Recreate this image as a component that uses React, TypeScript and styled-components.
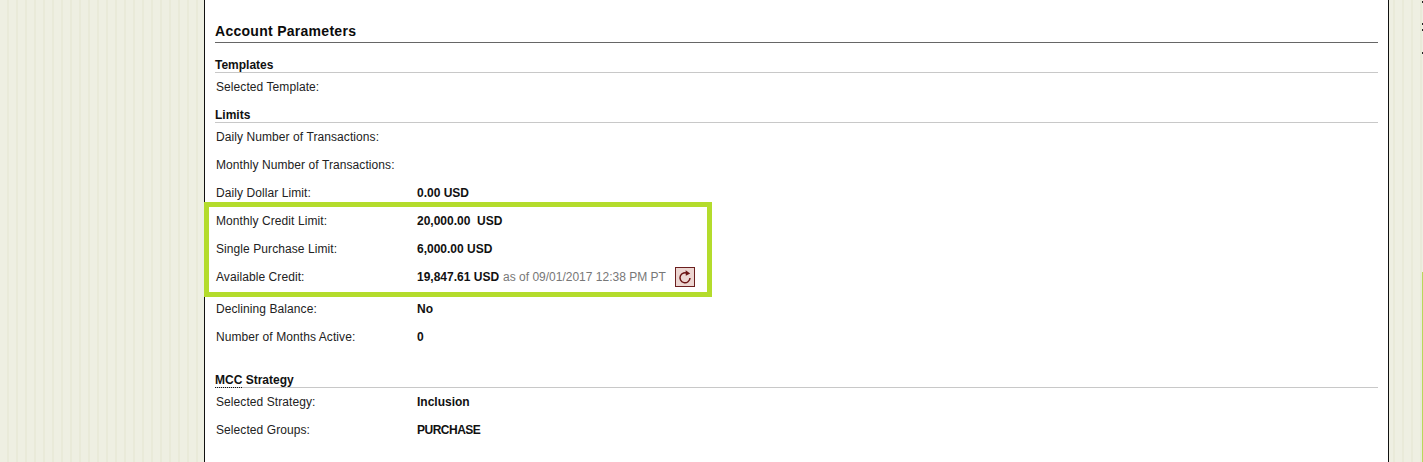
import React from "react";
import styled, { createGlobalStyle } from "styled-components";

const Global = createGlobalStyle`
  html, body { margin: 0; padding: 0; height: 462px; overflow: hidden; }
  body {
    font-family: "Liberation Sans", Arial, sans-serif;
    font-size: 12px;
    color: #111;
    background-color: #edeee0;
    background-image: repeating-linear-gradient(90deg, #eeefe2 0 7px, #e9ead9 7px 9px);
  }
`;

const Page = styled.div`
  position: relative;
  width: 1423px;
  height: 462px;
  overflow: hidden;
  display: flex;
  padding-left: 204px;
  box-sizing: border-box;
`;

const Panel = styled.main`
  position: relative;
  width: 1185px;
  height: 462px;
  box-sizing: border-box;
  background: #fff;
  border-left: 1px solid #111;
  border-right: 1px solid #111;
  padding: 22px 10px 0 10px;
`;

const Title = styled.h1`
  margin: 0;
  height: 20px;
  line-height: 18px;
  font-size: 14px;
  font-weight: bold;
  letter-spacing: 0.28px;
  color: #0b0b0b;
  border-bottom: 1px solid #666;
`;

const SectionTitle = styled.h2<{ $top: number }>`
  margin: ${(p) => p.$top}px 0 0;
  height: 15px;
  line-height: 17px;
  font-size: 12px;
  font-weight: bold;
  color: #111;
  border-bottom: 1px solid #c8c8c8;
`;

const Row = styled.div<{ $top?: number }>`
  display: flex;
  align-items: center;
  height: 28px;
  margin-top: ${(p) => p.$top ?? 0}px;
  padding-left: 1px;
`;

const Label = styled.span`
  width: 201px;
  flex: none;
  color: #222;
  letter-spacing: 0.08px;
`;

const Value = styled.span<{ $squeeze?: number }>`
  font-weight: bold;
  color: #111;
  letter-spacing: ${(p) => p.$squeeze ?? 0}px;
`;

const Note = styled.span`
  color: #777;
  margin-left: 4px;
`;

const Abbr = styled.abbr`
  text-decoration: none;
  border-bottom: 1px dotted #111;
`;

const RefreshButton = styled.button`
  width: 20px;
  height: 20px;
  margin-left: 9px;
  padding: 0;
  display: flex;
  align-items: center;
  justify-content: center;
  background: #ecd6d2;
  border: 1px solid #6b1f1f;
`;

const Highlight = styled.div`
  position: absolute;
  left: -1px;
  top: 202px;
  width: 508px;
  height: 95px;
  box-sizing: border-box;
  border: 5px solid #b4dc2c;
  pointer-events: none;
`;

const EdgeLine = styled.div`
  position: absolute;
  right: 0;
  top: 272px;
  bottom: 0;
  width: 1px;
  background: #b9d85a;
`;

const EdgeTick = styled.div<{ $top: number }>`
  position: absolute;
  right: 0;
  top: ${(p) => p.$top}px;
  width: 1px;
  height: 2px;
  background: #222;
`;

const rowsA: [string, string][] = [
  ["Monthly Credit Limit:", "20,000.00\u00a0 USD"],
  ["Single Purchase Limit:", "6,000.00 USD"],
];

export default function App() {
  return (
    <>
      <Global />
      <Page>
        <Panel>
          <Title>Account Parameters</Title>

          <SectionTitle $top={14}>Templates</SectionTitle>
          <Row>
            <Label>Selected Template:</Label>
          </Row>

          <SectionTitle $top={6}>Limits</SectionTitle>
          <Row>
            <Label>Daily Number of Transactions:</Label>
          </Row>
          <Row>
            <Label>Monthly Number of Transactions:</Label>
          </Row>
          <Row>
            <Label>Daily Dollar Limit:</Label>
            <Value>0.00 USD</Value>
          </Row>
          {rowsA.map(([l, v]) => (
            <Row key={l}>
              <Label>{l}</Label>
              <Value>{v}</Value>
            </Row>
          ))}
          <Row>
            <Label>Available Credit:</Label>
            <Value>19,847.61 USD</Value>
            <Note>as of 09/01/2017 12:38 PM PT</Note>
            <RefreshButton aria-label="Refresh">
              <svg width="16" height="16" viewBox="0 0 16 16" fill="none">
                <path d="M10.8 4.6A5 5 0 1 0 13 9" stroke="#6b1414" strokeWidth="1.5" />
                <path d="M8.6 1.2 L13.2 4.4 L8.8 6.8 Z" fill="#6b1414" />
              </svg>
            </RefreshButton>
          </Row>
          <Row $top={4}>
            <Label>Declining Balance:</Label>
            <Value>No</Value>
          </Row>
          <Row>
            <Label>Number of Months Active:</Label>
            <Value>0</Value>
          </Row>

          <SectionTitle $top={21}>
            <Abbr>MCC</Abbr> Strategy
          </SectionTitle>
          <Row>
            <Label>Selected Strategy:</Label>
            <Value>Inclusion</Value>
          </Row>
          <Row>
            <Label>Selected Groups:</Label>
            <Value $squeeze={-0.5}>PURCHASE</Value>
          </Row>
          <Highlight />
        </Panel>
        <EdgeTick $top={1} />
        <EdgeTick $top={23} />
        <EdgeTick $top={29} />
        <EdgeTick $top={52} />
        <EdgeLine />
      </Page>
    </>
  );
}
